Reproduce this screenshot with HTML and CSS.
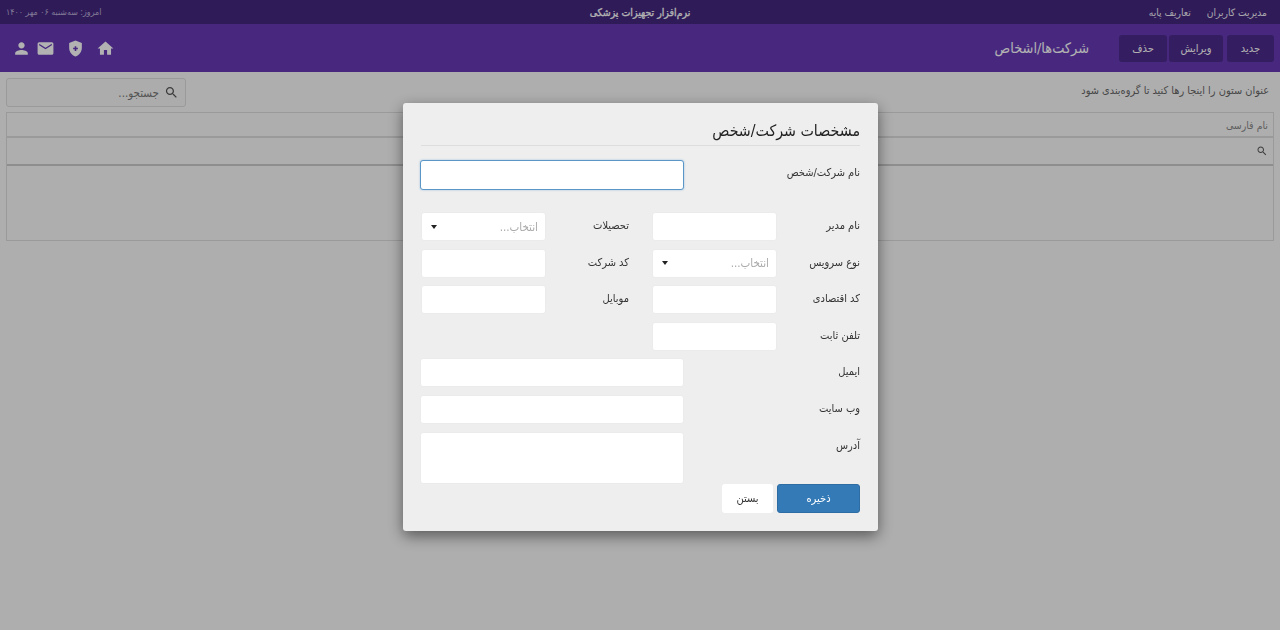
FILE: index.html
```html
<!DOCTYPE html>
<html lang="fa" dir="rtl">
<head>
<meta charset="utf-8">
<title>شرکت‌ها/اشخاص</title>
<link rel="stylesheet" href="styles.css">
</head>
<body>
<div class="topbar">
  <nav class="topnav"><a>مدیریت کاربران</a><a>تعاریف پایه</a></nav>
  <div class="apptitle">نرم‌افزار تجهیزات پزشکی</div>
  <div class="today">امروز: سه‌شنبه ۰۶ مهر ۱۴۰۰</div>
</div>
<header class="toolbar">
  <div class="actions"><button class="tbtn btn-new">جدید</button><button class="tbtn btn-edit">ویرایش</button><button class="tbtn btn-del">حذف</button></div>
  <h1 class="pagetitle">شرکت‌ها/اشخاص</h1>
  <div class="icons">
    <svg class="ico ico-home" viewBox="0 0 24 24"><path d="M10 20v-6h4v6h5v-8h3L12 3 2 12h3v8z"/></svg>
    <svg class="ico ico-shield" viewBox="0 0 24 24"><path fill-rule="evenodd" d="M12 2 4 5v6.09c0 5.05 3.41 9.76 8 10.91 4.59-1.15 8-5.86 8-10.91V5l-8-3zm3 11h-2v2h-2v-2H9v-2h2V9h2v2h2v2z"/></svg>
    <svg class="ico ico-mail" viewBox="0 0 24 24"><path d="M20 4H4c-1.1 0-1.99.9-1.99 2L2 18c0 1.1.9 2 2 2h16c1.1 0 2-.9 2-2V6c0-1.1-.9-2-2-2zm0 4l-8 5-8-5V6l8 5 8-5v2z"/></svg>
    <svg class="ico ico-user" viewBox="0 0 24 24"><path d="M12 12c2.21 0 4-1.79 4-4s-1.79-4-4-4-4 1.79-4 4 1.79 4 4 4zm0 2c-2.67 0-8 1.34-8 4v2h16v-2c0-2.66-5.33-4-8-4z"/></svg>
  </div>
</header>
<main class="content">
  <div class="gridtools">
    <span class="grouphint">عنوان ستون را اینجا رها کنید تا گروه‌بندی شود</span>
    <div class="searchbox">
      <svg class="sico" viewBox="0 0 24 24"><path d="M15.5 14h-.79l-.28-.27C15.41 12.59 16 11.11 16 9.5 16 5.91 13.09 3 9.5 3S3 5.91 3 9.5 5.91 16 9.5 16c1.61 0 3.09-.59 4.23-1.57l.27.28v.79l5 4.99L20.49 19l-4.99-5zm-6 0C7.01 14 5 11.99 5 9.5S7.01 5 9.5 5 14 7.01 14 9.5 11.99 14 9.5 14z"/></svg>
      <span class="searchph">جستجو...</span>
    </div>
  </div>
  <div class="datagrid">
    <div class="dg-head">نام فارسی</div>
    <div class="dg-filter"><svg class="fico" viewBox="0 0 24 24"><path d="M15.5 14h-.79l-.28-.27C15.41 12.59 16 11.11 16 9.5 16 5.91 13.09 3 9.5 3S3 5.91 3 9.5 5.91 16 9.5 16c1.61 0 3.09-.59 4.23-1.57l.27.28v.79l5 4.99L20.49 19l-4.99-5zm-6 0C7.01 14 5 11.99 5 9.5S7.01 5 9.5 5 14 7.01 14 9.5 11.99 14 9.5 14z"/></svg></div>
    <div class="dg-body"></div>
  </div>
</main>
<div class="overlay">
  <section class="modal">
    <h2 class="modal-title">مشخصات شرکت/شخص</h2>
    <div class="row row-first"><label class="lbl">نام شرکت/شخص</label><div class="input input-wide focused"></div></div>
    <div class="row row-second"><label class="lbl lbl-a">نام مدیر</label><div class="input input-half"></div><label class="lbl lbl-b">تحصیلات</label><div class="input input-half select"><span class="ph">انتخاب...</span><i class="caret"></i></div></div>
    <div class="row"><label class="lbl lbl-a">نوع سرویس</label><div class="input input-half select"><span class="ph">انتخاب...</span><i class="caret"></i></div><label class="lbl lbl-b">کد شرکت</label><div class="input input-half"></div></div>
    <div class="row"><label class="lbl lbl-a">کد اقتصادی</label><div class="input input-half"></div><label class="lbl lbl-b">موبایل</label><div class="input input-half"></div></div>
    <div class="row"><label class="lbl lbl-a">تلفن ثابت</label><div class="input input-half"></div></div>
    <div class="row"><label class="lbl">ایمیل</label><div class="input input-wide"></div></div>
    <div class="row"><label class="lbl">وب سایت</label><div class="input input-wide"></div></div>
    <div class="row row-area"><label class="lbl">آدرس</label><div class="input input-wide area"></div></div>
    <div class="modal-actions"><button class="mbtn primary">ذخیره</button><button class="mbtn plain">بستن</button></div>
  </section>
</div>
</body>
</html>
```
FILE: styles.css
```css
* { box-sizing: border-box; }
html, body { margin: 0; height: 630px; overflow: hidden; }
body { background: #fafafa; font-family: "DejaVu Sans Condensed", "DejaVu Sans", sans-serif; font-size: 11px; color: #333; }
.topbar { height: 24px; background: #44277f; color: #fff; display: grid; grid-template-columns: 1fr auto 1fr; align-items: center; padding: 0 13px; font-size: 10.2px; }
.topnav { display: flex; gap: 16px; color: #f0edf6; }
.apptitle { font-weight: 400; font-size: 10.5px; -webkit-text-stroke: 0.3px #fff; }
.today { justify-self: end; font-size: 8.8px; color: #b9acd6; margin-left: -7px; }
.toolbar { height: 48px; background: #673ab7; display: flex; align-items: center; padding: 0 6px; color: #fff; }
.actions { display: flex; gap: 2px; }
.tbtn { height: 27px; border: 0; border-radius: 3px; background: #4c2a8c; color: #fff; font: inherit; font-size: 11px; padding: 0; }
.btn-new { width: 47px; margin-left: 2px; }
.btn-edit { width: 54px; }
.btn-del { width: 48px; }
.pagetitle { margin: 0 30px 0 0; font-size: 14.4px; font-weight: 400; flex: 1; }
.icons { display: flex; align-items: center; gap: 11px; padding-left: 5.5px; }
.ico { width: 19px; height: 19px; fill: #fff; display: block; }
.ico-user { margin-right: -6px; }
.content { padding: 6px; }
.gridtools { display: flex; justify-content: space-between; align-items: center; height: 29px; }
.grouphint { font-size: 10.9px; color: #666; padding-right: 5px; position: relative; top: -2px; }
.searchbox { width: 180px; height: 29px; border: 1px solid #ddd; border-radius: 3px; background: #f7f7f7; display: flex; align-items: center; padding-right: 6px; gap: 5px; color: #777; }
.sico { width: 15px; height: 15px; fill: #555; }
.searchph { font-size: 11.5px; }
.datagrid { margin-top: 5px; border: 1px solid #ddd; height: 129px; background: #fafafa; }
.dg-head { height: 25px; border-bottom: 2px solid #ddd; padding-right: 5px; display: flex; align-items: center; color: #888; font-size: 10.5px; }
.dg-filter { height: 28px; border-bottom: 2px solid #ccc; display: flex; align-items: center; padding-right: 5px; }
.fico { width: 12px; height: 12px; fill: #555; }
.overlay { position: fixed; inset: 0; background: rgba(0,0,0,.3); }
.modal { position: absolute; left: 403px; top: 103px; width: 475px; height: 428px; background: #eee; border-radius: 3px; box-shadow: 0 5px 15px rgba(0,0,0,.5); padding: 0 18px; }
.modal-title { margin: 0; height: 43px; padding-top: 18px; font-size: 15.8px; line-height: 20px; font-weight: 400; color: #222; border-bottom: 1px solid #ddd; }
.row { display: flex; align-items: flex-start; height: 29px; margin-top: 7.6px; }
.row-first { height: 30px; margin-top: 14px; }
.row-second { margin-top: 22px; }
.row-area { height: 52px; }
.lbl { flex: none; font-size: 11px; line-height: 27px; color: #333; }
.row-first .lbl { line-height: 26px; }
.row > .lbl:first-child:not(.lbl-a) { width: 176px; }
.lbl-a { width: 83px; }
.lbl-b { width: 106px; padding-right: 23px; }
.input { flex: none; height: 29px; background: #fff; border: 1px solid #ebebeb; border-radius: 3px; }
.input-wide { width: 264px; }
.input-half { width: 125px; }
.focused { height: 30px; border: 1px solid #5b96c8; box-shadow: 0 0 2px rgba(66,139,202,.5); }
.area { height: 52px; }
.select { display: flex; align-items: center; justify-content: space-between; padding: 0 7px 0 9px; }
.ph { font-size: 11.5px; color: #aaa; }
.caret { width: 0; height: 0; border-top: 4px solid #222; border-left: 3.5px solid transparent; border-right: 3.5px solid transparent; }
.modal-actions { display: flex; gap: 4px; }
.mbtn { height: 29px; border: 0; border-radius: 3px; font: inherit; font-size: 11px; padding: 0; }
.primary { width: 83px; background: #337ab7; color: #fff; border: 1px solid #2e6da4; }
.plain { width: 51px; background: #fff; color: #333; }
```
